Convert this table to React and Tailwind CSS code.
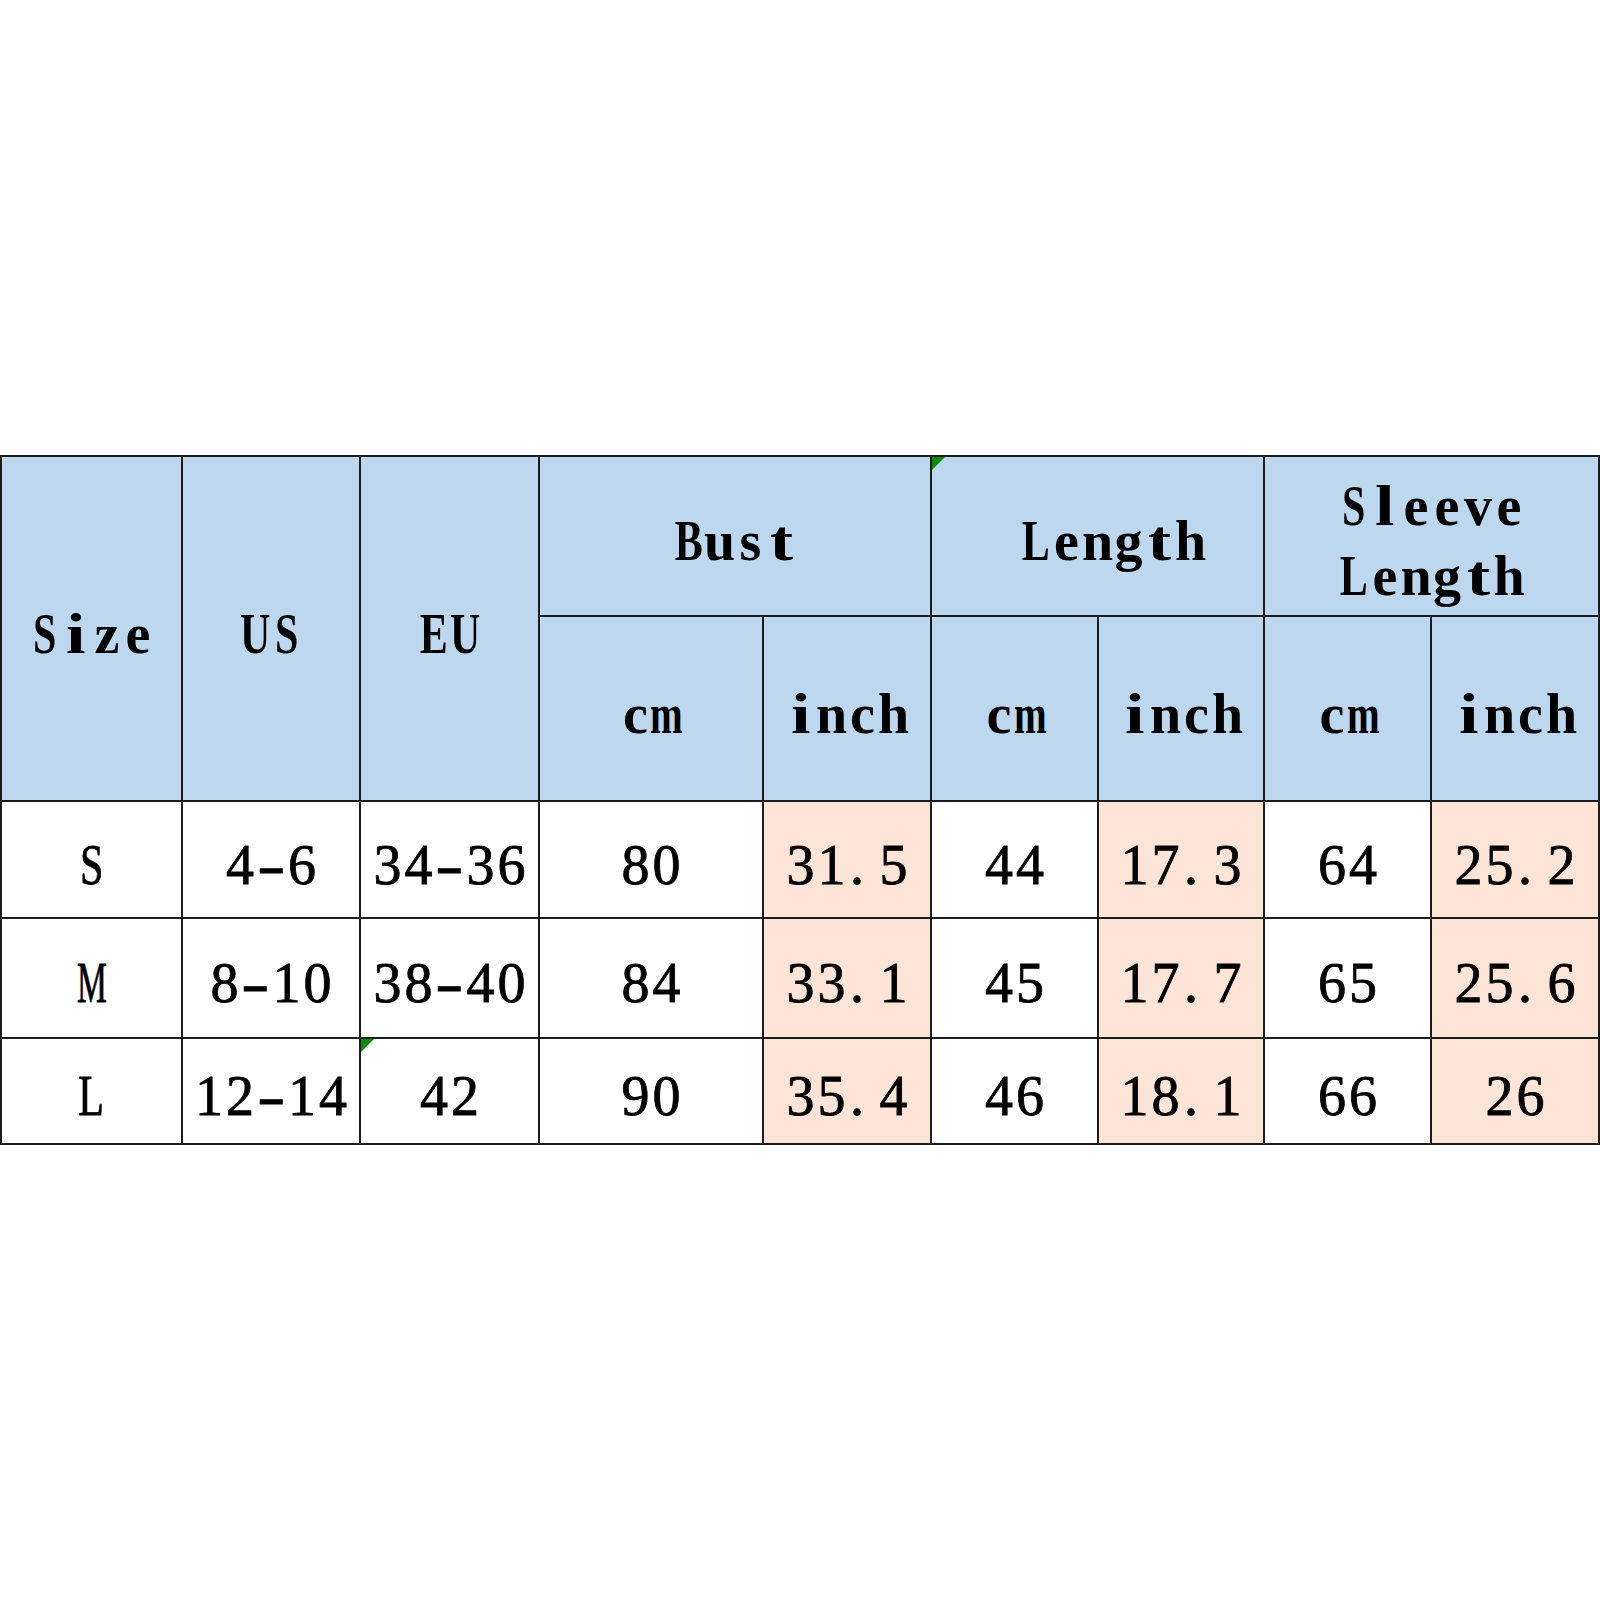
import React from "react";

function glyphClass(c) {
  if (c === "M") return "scale-x-60";
  if (c === "m") return "scale-x-70";
  if (/[A-Z]/.test(c)) return "scale-x-75";
  if (c === "-") return "scale-x-150";
  if (c === "i" || c === "l" || c === "t") return "scale-x-125";
  return "";
}

function Txt({ t }) {
  return (
    <span className="inline-flex">
      {[...t].map((c, i) => (
        <span
          key={i}
          className={c === "." ? "inline-flex w-[31px] shrink-0 justify-start pl-[3px]" : "inline-flex w-[31px] shrink-0 justify-center"}
        >
          <span className={"inline-block shrink-0 whitespace-pre " + glyphClass(c)}>{c === " " ? "\u00a0" : c}</span>
        </span>
      ))}
    </span>
  );
}

function Tri() {
  return (
    <span className="absolute left-0 top-0 h-0 w-0 border-t-[13px] border-r-[13px] border-t-[#118a11] border-r-transparent" />
  );
}

function H({ children, className = "" }) {
  return (
    <div className={"relative flex flex-col items-center justify-center bg-[#bdd7ee] pt-[10px] font-bold " + className}>
      {children}
    </div>
  );
}

function D({ children, peach, tri }) {
  return (
    <div
      className={
        "relative flex items-center justify-center pt-[10px] [-webkit-text-stroke:0.8px_#000] " + (peach ? "bg-[#fce4d6]" : "bg-white")
      }
    >
      {tri && <Tri />}
      <Txt t={children} />
    </div>
  );
}

const rows = [
  ["S", "4-6", "34-36", "80", "31.5", "44", "17.3", "64", "25.2"],
  ["M", "8-10", "38-40", "84", "33.1", "45", "17.7", "65", "25.6"],
  ["L", "12-14", "42", "90", "35.4", "46", "18.1", "66", "26"],
];

export default function App() {
  return (
    <div className="min-h-[1600px] w-[1600px] bg-white pt-[455px] text-black" style={{ fontFamily: '"Liberation Serif", "Times New Roman", serif' }}>
      <div className="grid w-fit grid-cols-[179px_176px_177px_222px_166px_165px_164px_165px_166px] grid-rows-[158px_183px_115px_118px_104px] gap-[2px] bg-[#1c1c1c] p-[2px] text-[56px] leading-none">
        <H className="row-span-2"><Txt t="Size" /></H>
        <H className="row-span-2"><Txt t="US" /></H>
        <H className="row-span-2"><Txt t="EU" /></H>
        <H className="col-span-2"><Txt t="Bust" /></H>
        <H className="col-span-2">
          <Tri />
          <Txt t=" Length" />
        </H>
        <H className="col-span-2 gap-[14px]">
          <Txt t="Sleeve" />
          <Txt t="Length" />
        </H>
        <H><Txt t="cm" /></H>
        <H><Txt t="inch" /></H>
        <H><Txt t="cm" /></H>
        <H><Txt t="inch" /></H>
        <H><Txt t="cm" /></H>
        <H><Txt t="inch" /></H>
        {rows.map((r, ri) =>
          r.map((v, ci) => (
            <D key={ri + "-" + ci} peach={ci === 4 || ci === 6 || ci === 8} tri={ri === 2 && ci === 2}>
              {v}
            </D>
          ))
        )}
      </div>
    </div>
  );
}
